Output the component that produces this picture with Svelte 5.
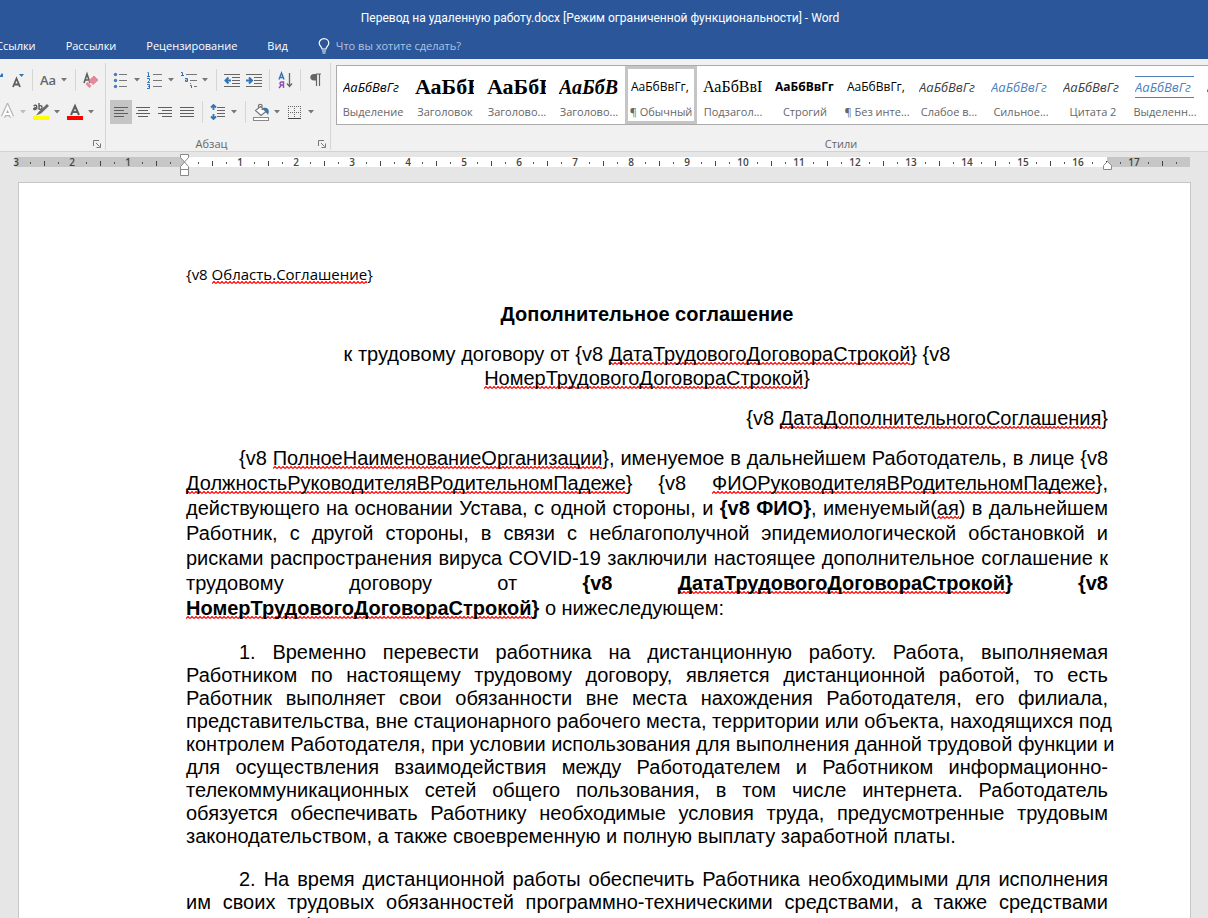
<script lang="ts">
	type StylePreset = { name: string; sample: string; kind: string };

	const tabs = ['Ссылки', 'Рассылки', 'Рецензирование', 'Вид'];

	const presets: StylePreset[] = [
		{ name: 'Выделение', sample: 'АаБбВвГг', kind: 'emphasis' },
		{ name: 'Заголовок', sample: 'АаБбВ', kind: 'heading' },
		{ name: 'Заголово...', sample: 'АаБбВ', kind: 'heading' },
		{ name: 'Заголово...', sample: 'АаБбВв', kind: 'heading-italic' },
		{ name: '¶ Обычный', sample: 'АаБбВвГг,', kind: 'normal' },
		{ name: 'Подзагол...', sample: 'АаБбВвГ', kind: 'subtitle' },
		{ name: 'Строгий', sample: 'АаБбВвГг,', kind: 'strong' },
		{ name: '¶ Без инте...', sample: 'АаБбВвГг,', kind: 'normal' },
		{ name: 'Слабое в...', sample: 'АаБбВвГг', kind: 'subtle' },
		{ name: 'Сильное...', sample: 'АаБбВвГг', kind: 'intense' },
		{ name: 'Цитата 2', sample: 'АаБбВвГг', kind: 'subtle' },
		{ name: 'Выделенн...', sample: 'АаБбВвГг', kind: 'quote' },
		{ name: 'Слабая с...', sample: 'АаБбВвГг', kind: 'subtle' }
	];

	let selected = $state(4);

	// Ruler geometry: one centimetre on screen and the left margin's zero mark.
	const cm = 55.9;
	const zero = 184;
	const numbers = Array.from({ length: 21 }, (_, i) => i - 3).filter((n) => n !== 0 && n <= 17);
	const quarters = Array.from({ length: 84 }, (_, i) => i - 12).filter((q) => q % 4 !== 0);
	const at = (units: number) => Math.round(zero + units * cm);
</script>

<svelte:head>
	<title>Перевод на удаленную работу.docx - Word</title>
</svelte:head>

{#snippet arrow()}
	<svg class="arrow" width="6" height="4" viewBox="0 0 6 4"><path d="M0 0h6L3 3.5z" /></svg>
{/snippet}

{#snippet launcher()}
	<button class="launcher" aria-label="Параметры">
		<svg width="8" height="8" viewBox="0 0 8 8" fill="none" stroke="#777">
			<path d="M.5 6V.5H6M3 3l3.500 3.500M7.500 3.500v4h-4" />
		</svg>
	</button>
{/snippet}

<div class="window">
	<header>
		<h1>Перевод на удаленную работу.docx [Режим ограниченной функциональности] - Word</h1>
		<nav>
			{#each tabs as tab (tab)}
				<button class="tab">{tab}</button>
			{/each}
			<label class="tell-me">
				<svg width="12" height="16" viewBox="0 0 12 16" fill="none" stroke="#fff" stroke-width="1.2">
					<path d="M4 11C4 9 1.200 7.700 1.200 5.200a4.800 4.600 0 0 1 9.600 0C10.800 7.700 8 9 8 11zM4 13h4M4.500 15h3" />
				</svg>
				<input type="text" placeholder="Что вы хотите сделать?" />
			</label>
		</nav>
	</header>

	<div class="ribbon">
		<section class="group font">
			<div class="row">
				<button class="tool" aria-label="Увеличить размер шрифта">
					<svg width="16" height="18" viewBox="0 0 16 18"><path d="M12 6l3-4 3 4z" fill="#2e75b5" /></svg>
				</button>
				<button class="tool" aria-label="Уменьшить размер шрифта">
					<svg width="16" height="18" viewBox="0 0 16 18">
						<path d="M4 16L7.500 7.500 11 16M5.200 13.500h4.600" fill="none" stroke="#5e5e5e" stroke-width="1.800" />
						<path d="M10 3h5l-2.500 3z" fill="#2e75b5" />
					</svg>
				</button>
				<span class="sep"></span>
				<button class="tool split" aria-label="Регистр"><span class="case">Aa</span>{@render arrow()}</button>
				<span class="sep"></span>
				<button class="tool" aria-label="Удалить все форматирование">
					<svg width="16" height="18" viewBox="0 0 16 18">
						<path d="M1 12L4 3l3 9M2 9h4" fill="none" stroke="#5e5e5e" stroke-width="1.600" />
						<path d="M11 5l4 4-5 4.500-4-4z" fill="#e8869a" stroke="#e8869a" stroke-linejoin="round" />
						<path d="M4.500 11l4 4-2 2-4-4z" fill="#e8869a" />
					</svg>
				</button>
			</div>
			<div class="row second">
				<button class="tool split" aria-label="Текстовые эффекты">
					<svg width="16" height="18" viewBox="0 0 16 18" fill="none">
						<path d="M4 14L8.500 4 13 14M5.500 11h6" stroke="#b4b4b4" stroke-width="4.400" />
						<path d="M4 14L8.500 4 13 14M5.500 11h6" stroke="#fff" stroke-width="2" />
					</svg>
					<svg class="arrow off" width="6" height="4" viewBox="0 0 6 4"><path d="M0 0h6L3 3.500z" /></svg>
				</button>
				<button class="tool split" aria-label="Цвет выделения текста">
					<svg width="16" height="18" viewBox="0 0 16 18">
						<g fill="none" stroke="#5e5e5e" stroke-width="1.400">
							<path d="M.7 3c1-1 3-1 3 .5v3M3.700 4.500C0 4.500 0 7 2 6.500l1.700-1M6 0v6.500M6 3.500c1-1.500 3-1 3 1s-2 2.500-3 1" />
						</g>
						<path d="M14 1l2 2-8 7.500-5 2 3-4z" fill="#6a6a6a" />
						<rect y="13" width="16" height="4" fill="#ff0" />
					</svg>
					{@render arrow()}
				</button>
				<button class="tool split" aria-label="Цвет текста">
					<svg width="16" height="18" viewBox="0 0 16 18">
						<path d="M4 12L8 3l4 9M5.500 9h5" fill="none" stroke="#5e5e5e" stroke-width="2" />
						<rect y="13" width="16" height="4" fill="#f00" />
					</svg>
					{@render arrow()}
				</button>
			</div>
			<footer><span></span>{@render launcher()}</footer>
		</section>

		<section class="group paragraph">
			<div class="row">
				<button class="tool split" aria-label="Маркеры">
					<svg width="16" height="18" viewBox="0 0 16 18">
						<g fill="#4a7ebb">
							<circle cx="2.500" cy="3.500" r="1.700" />
							<circle cx="2.500" cy="9.500" r="1.700" />
							<circle cx="2.500" cy="15.500" r="1.700" />
						</g>
						<path d="M6 3.500h8M6 9.500h8M6 15.500h8" stroke="#777" />
					</svg>
					{@render arrow()}
				</button>
				<button class="tool split" aria-label="Нумерация">
					<svg width="16" height="18" viewBox="0 0 16 18">
						<g fill="none" stroke="#2e75b5"><path d="M.5 1.500h1V5M0 5.500h3M0 7.500h2.500v2L.5 11.500H3M0 13.500h2.500v4H0M1 15.500h1.500" /></g>
						<path d="M6 3.500h9M6 9.500h9M6 15.500h9" stroke="#777" />
					</svg>
					{@render arrow()}
				</button>
				<button class="tool split" aria-label="Многоуровневый список">
					<svg width="16" height="18" viewBox="0 0 16 18">
						<path d="M0 1.500h1.500V4M0 4.500h3M4 7.500h2.500v3H4.500V9h2M9.500 12v1M9 14.500h1.500V17" fill="none" stroke="#2e75b5" />
						<path d="M5 3.500h11M9 9.500h7M13 15.500h3" stroke="#777" />
					</svg>
					{@render arrow()}
				</button>
				<span class="sep"></span>
				<button class="tool" aria-label="Уменьшить отступ">
					<svg width="16" height="18" viewBox="0 0 16 18">
						<path d="M0 3.500h16M8 6.500h8M8 9.500h8M8 12.500h8M0 15.500h16" stroke="#666" />
						<path d="M7 9.500H1.500M4.500 6.500l-3 3 3 3" fill="none" stroke="#2e75b5" stroke-width="2" />
					</svg>
				</button>
				<button class="tool" aria-label="Увеличить отступ">
					<svg width="16" height="18" viewBox="0 0 16 18">
						<path d="M0 3.500h16M8 6.500h8M8 9.500h8M8 12.500h8M0 15.500h16" stroke="#666" />
						<path d="M0 9.500h5.500M3 6.500l3 3-3 3" fill="none" stroke="#2e75b5" stroke-width="2" />
					</svg>
				</button>
				<span class="sep"></span>
				<button class="tool" aria-label="Сортировка">
					<svg width="16" height="18" viewBox="0 0 16 18" fill="none">
						<path d="M2 8.500L4.500 2 7 8.500M3 6.500h3" stroke="#2e75b5" stroke-width="1.400" />
						<path d="M6.500 17v-6h-2c-2 0-2 3 0 3h2M4.500 14L2 17" stroke="#8e4bb5" stroke-width="1.400" />
						<path d="M12.500 2v13M10 12.500l2.500 3 2.500-3" stroke="#666" stroke-width="1.300" />
					</svg>
				</button>
				<span class="sep"></span>
				<button class="tool" aria-label="Отобразить все знаки">
					<svg width="16" height="18" viewBox="0 0 16 18">
						<path d="M8 3H6C1 3 1 9.500 6 9.500h2z" fill="#666" />
						<path d="M8 3h5M8.500 3v12M11.500 3v12" stroke="#666" stroke-width="1.200" />
					</svg>
				</button>
			</div>
			<div class="row">
				<button class="tool pressed" aria-label="По левому краю">
					<svg width="16" height="18" viewBox="0 0 16 18"><path d="M1 4.500h14M1 7.500h10M1 10.500h14M1 13.500h10" stroke="#5e5e5e" /></svg>
				</button>
				<button class="tool" aria-label="По центру">
					<svg width="16" height="18" viewBox="0 0 16 18"><path d="M1 4.500h14M3 7.500h10M1 10.500h14M3 13.500h10" stroke="#5e5e5e" /></svg>
				</button>
				<button class="tool" aria-label="По правому краю">
					<svg width="16" height="18" viewBox="0 0 16 18"><path d="M1 4.500h14M5 7.500h10M1 10.500h14M5 13.500h10" stroke="#5e5e5e" /></svg>
				</button>
				<button class="tool" aria-label="По ширине">
					<svg width="16" height="18" viewBox="0 0 16 18"><path d="M1 4.500h14M1 7.500h14M1 10.500h14M1 13.500h14" stroke="#5e5e5e" /></svg>
				</button>
				<span class="sep"></span>
				<button class="tool split" aria-label="Интервал">
					<svg width="16" height="18" viewBox="0 0 16 18">
						<path d="M3.500 2v5M3.500 11v5M1 4.500L3.500 2 6 4.500M1 13.500L3.500 16 6 13.500" fill="none" stroke="#2e75b5" stroke-width="1.800" />
						<path d="M7 4.500h8M7 7.500h8M7 10.500h8M7 13.500h8" stroke="#666" />
					</svg>
					{@render arrow()}
				</button>
				<span class="sep"></span>
				<button class="tool split" aria-label="Заливка">
					<svg width="16" height="18" viewBox="0 0 16 18">
						<path d="M10 5c5-1 7 2 5 7-1-2-2-3-5-4z" fill="#2e75b5" />
						<path d="M7.500 3.500L13 8.500l-5 4-5.500-5zM5.500 6V2.500C5.500 1 9 1 9 2.500V7" fill="#fff" stroke="#777" stroke-width="1.200" />
						<rect x=".5" y="14.500" width="15" height="3" fill="#fff" stroke="#888" />
					</svg>
					{@render arrow()}
				</button>
				<button class="tool split" aria-label="Границы">
					<svg width="16" height="18" viewBox="0 0 16 18">
						<path d="M1 3.500h13M1 9.500h13M1.500 3v12M7.500 3v12M13.500 3v12" stroke="#666" stroke-dasharray="1 1" />
						<path d="M1 15.500h13" stroke="#444" />
					</svg>
					{@render arrow()}
				</button>
			</div>
			<footer><span>Абзац</span>{@render launcher()}</footer>
		</section>

		<section class="group styles">
			<div class="gallery">
				{#each presets as preset, i}
					<button class="preset" class:selected={selected === i} onclick={() => (selected = i)}>
						<span class={`sample ${preset.kind}`}>{preset.sample}</span>
						<span class="name">{preset.name}</span>
					</button>
				{/each}
			</div>
			<footer><span>Стили</span></footer>
		</section>
	</div>

	<svg class="ruler" width="1208" height="30" viewBox="0 0 1208 30">
		<rect x="15" y="5" width="1175" height="10" fill="#c6c6c6" />
		<rect x={zero} y="5" width="923" height="10" fill="#fff" />
		{#each numbers as n}
			<text x={at(n)} y="14">{Math.abs(n)}</text>
		{/each}
		{#each quarters as q}
			{#if q % 2 === 0}
				<rect x={at(q / 4)} y="9" width="1" height="5" fill="#444" />
			{:else}
				<rect x={at(q / 4)} y="10" width="1" height="2" fill="#555" />
			{/if}
		{/each}
		<g fill="#fff" stroke="#888">
			<path d="M180.500 2.500h8v3l-4 4.500-4-4.500z" />
			<path d="M184.500 10l4 4.500v3h-8v-3z" />
			<path d="M180.500 17.500h8v6h-8z" />
			<path d="M1107.500 9.500l4 4v4h-8v-4z" />
		</g>
	</svg>

	<main>
		<article>
			<p class="area">{'{v8 '}<u>Область.Соглашение</u>{'}'}</p>
			<h2>Дополнительное соглашение</h2>
			<p class="center">
				к трудовому договору от {'{v8 '}<u>ДатаТрудовогоДоговораСтрокой</u>{'} {v8'}
				<u>НомерТрудовогоДоговораСтрокой</u>{'}'}
			</p>
			<p class="right">{'{v8 '}<u>ДатаДополнительногоСоглашения</u>{'}'}</p>
			<p class="intro">
				{'{v8 '}<u>ПолноеНаименованиеОрганизации</u>{'}'}, именуемое в дальнейшем Работодатель, в лице {'{v8 '}
				<u>ДолжностьРуководителяВРодительномПадеже</u>{'} {v8 '}<u>ФИОРуководителяВРодительномПадеже</u>{'}'},
				действующего на основании Устава, с одной стороны, и <b>{'{v8 ФИО}'}</b>, именуемый(<u>ая</u>) в
				дальнейшем Работник, с другой стороны, в связи с неблагополучной эпидемиологической обстановкой и
				рисками распространения вируса COVID-19 заключили настоящее дополнительное соглашение к трудовому
				договору от <b>{'{v8 '}<u>ДатаТрудовогоДоговораСтрокой</u>{'} {v8 '}<u>НомерТрудовогоДоговораСтрокой</u>{'}'}</b>
				о нижеследующем:
			</p>
			<p class="clause">
				1. Временно перевести работника на дистанционную работу. Работа, выполняемая Работником по настоящему
				трудовому договору, является дистанционной работой, то есть Работник выполняет свои обязанности вне
				места нахождения Работодателя, его филиала,
				<span class="tight">представительства, вне стационарного рабочего места, территории или объекта, находящихся под</span>
				<span class="tight">контролем Работодателя, при условии использования для выполнения данной трудовой функции и</span>
				для осуществления взаимодействия между Работодателем и Работником
				информационно-телекоммуникационных сетей общего пользования, в том числе интернета. Работодатель
				обязуется обеспечивать Работнику необходимые условия труда, предусмотренные трудовым
				законодательством, а также своевременную и полную выплату заработной платы.
			</p>
			<p class="clause">
				2. На время дистанционной работы обеспечить Работника необходимыми для исполнения им своих трудовых
				обязанностей программно-техническими средствами, а также средствами защиты информации и иными
				средствами, предоставленными или рекомендованными Работодателем.
			</p>
		</article>
	</main>
</div>

<style>
	.window {
		display: flex;
		flex-direction: column;
		height: 100vh;
		overflow: hidden;
		background: #e6e6e6;
		color: #444;
		font: 11px/16px 'Open Sans', 'Noto Sans', sans-serif;
	}

	:global(body) {
		margin: 0;
	}

	button {
		padding: 0;
		border: 0;
		background: none;
		color: inherit;
		font: inherit;
	}

	header {
		background: #2b579a;
		color: #fff;
	}

	h1 {
		margin: 0;
		padding: 10px 8px 7px 0;
		font: 12px/16px Roboto, 'Open Sans', sans-serif;
		text-align: center;
	}

	nav {
		display: flex;
		align-items: center;
		gap: 30px;
		height: 26px;
		margin-left: -4px;
	}

	.tell-me {
		display: flex;
		align-items: center;
		gap: 6px;
	}

	.tell-me input {
		width: 200px;
		padding: 0;
		border: 0;
		background: none;
		color: #fff;
		font: inherit;
	}

	.tell-me input::placeholder {
		color: #b1c3e0;
		opacity: 1;
	}

	.ribbon {
		display: flex;
		height: 92px;
		border-bottom: 1px solid #d2d2d2;
		background: #f1f1f1;
	}

	.group {
		display: flex;
		flex-direction: column;
		gap: 8px;
		box-sizing: border-box;
		margin: 4px 0 1px;
		padding-top: 5px;
		border-right: 1px solid #d5d5d5;
	}

	.font {
		flex: none;
		width: 106px;
		padding-right: 3px;
		overflow: hidden;
	}

	.font .row {
		justify-content: flex-end;
	}

	.font .second {
		padding-right: 4px;
	}

	.paragraph {
		flex: none;
		width: 225px;
		padding-left: 4px;
	}

	.row {
		display: flex;
		flex: none;
		align-items: center;
		height: 24px;
	}

	.tool {
		display: flex;
		flex: none;
		align-items: center;
		width: 22px;
		height: 24px;
		padding: 0 3px;
		box-sizing: border-box;
	}

	.split {
		justify-content: space-between;
		width: 34px;
		padding-right: 4px;
	}

	.pressed {
		background: #c5c5c5;
	}

	.case {
		font-size: 13px;
		font-weight: 600;
		color: #666;
	}

	.arrow {
		fill: #777;
	}

	.off {
		fill: #bbb;
	}

	.sep {
		flex: none;
		width: 1px;
		height: 22px;
		margin: 0 4px;
		background: #d5d5d5;
	}

	footer {
		display: flex;
		flex: none;
		align-items: center;
		height: 16px;
		margin: auto 0 -2px;
		color: #666;
	}

	footer span {
		flex: 1;
		text-align: center;
	}

	.launcher {
		display: flex;
		padding: 0 1px;
	}

	.paragraph footer {
		margin-left: -4px;
	}

	.paragraph .launcher {
		padding-right: 4px;
	}

	.styles {
		flex: 1;
		min-width: 0;
		padding: 2px 0 0 5px;
		border: 0;
	}

	.styles footer span {
		padding-left: 138px;
	}

	.gallery {
		display: flex;
		flex: none;
		height: 58px;
		overflow: hidden;
		border: 1px solid #ababab;
		border-right: 0;
		background: #fff;
	}

	.preset {
		display: flex;
		flex: none;
		flex-direction: column;
		box-sizing: border-box;
		width: 72px;
		padding: 7px 3px 0;
		border: 3px solid transparent;
		white-space: nowrap;
		overflow: hidden;
	}

	.selected {
		border-color: #c5c5c5;
	}

	.sample {
		width: 59px;
		height: 22px;
		overflow: hidden;
		color: #000;
		font-size: 12px;
		line-height: 22px;
		text-align: left;
	}

	.name {
		align-self: center;
		margin-top: 6px;
		color: #666;
	}

	.heading,
	.heading-italic,
	.subtitle {
		font-family: 'Liberation Serif', serif;
		font-size: 22px;
		font-weight: bold;
	}

	.heading-italic {
		font-size: 20px;
		font-style: italic;
	}

	.subtitle {
		font-size: 16px;
		font-weight: normal;
	}

	.strong {
		font-weight: bold;
	}

	.emphasis,
	.subtle,
	.intense,
	.quote {
		font-size: 13px;
		font-style: italic;
	}

	.subtle {
		color: #404040;
	}

	.intense,
	.quote {
		color: #4f81bd;
	}

	.quote {
		box-sizing: border-box;
		border: solid #4f81bd;
		border-width: 1px 0;
		line-height: 20px;
	}

	.ruler {
		flex: none;
	}

	.ruler text {
		fill: #444;
		font-size: 10px;
		font-weight: 600;
		text-anchor: middle;
	}

	main {
		flex: 1;
		min-height: 0;
		padding: 0 17px 0 18px;
	}

	article {
		padding: 79px 82px 40px 167px;
		border: 1px solid #c6c6c6;
		background: #fff;
		color: #000;
		font: 20px/24px 'Liberation Sans', Arial, sans-serif;
	}

	article p,
	h2 {
		margin: 0 0 16px;
	}

	h2 {
		font-size: 20px;
		text-align: center;
	}

	article .area {
		font: 15px/24px 'Open Sans', 'Noto Sans', sans-serif;
	}

	.center {
		padding: 0 120px;
		text-align: center;
	}

	.right {
		text-align: right;
	}

	.intro,
	.clause {
		text-align: justify;
		text-indent: 53px;
	}

	article .intro {
		margin-bottom: 20px;
		line-height: 25px;
	}

	article .clause {
		margin-bottom: 20px;
		line-height: 23px;
	}

	.tight {
		white-space: nowrap;
	}

	/* spelling squiggle */
	u {
		background: url("data:image/svg+xml,%3Csvg xmlns='http://www.w3.org/2000/svg' width='4' height='3'%3E%3Cpath d='M0 2.500L2 .5l2 2' fill='none' stroke='red' stroke-width='1.200'/%3E%3C/svg%3E")
			repeat-x left bottom;
		text-decoration: none;
	}
</style>
